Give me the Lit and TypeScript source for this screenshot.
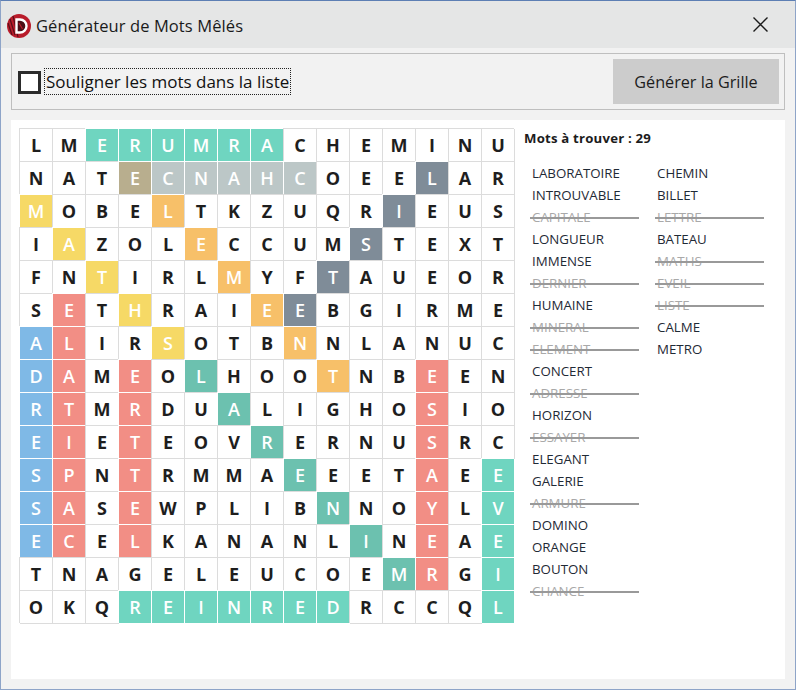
import { LitElement, html, css } from "lit";
import { customElement } from "lit/decorators.js";

const ROWS = [
  "LMERUMRACHEMINU",
  "NATECNAHCOEELAR",
  "MOBELTKZUQRIEUS",
  "IAZOLECCUMSTEXT",
  "FNTIRLMYFTAUEOR",
  "SETHRAIEEBGIRME",
  "ALIRSOTBNNLANUC",
  "DAMEOLHOOTNBEEN",
  "RTMRDUALIGHOSIO",
  "EIETEOVRERNUSRC",
  "SPNTRMMAEEETAEE",
  "SASEWPLIBNNOYLV",
  "ECELKANANLINEAE",
  "TNAGELEUCOEMRGI",
  "OKQREINREDRCCQL",
];

type Cell = [number, number];
const line = (r: number, c: number, dr: number, dc: number, n: number): Cell[] =>
  Array.from({ length: n }, (_, i) => [r + dr * i, c + dc * i] as Cell);

const FILLS: Record<string, Cell[]> = {
  teal: [...line(0, 2, 0, 1, 6), ...line(10, 14, 1, 0, 5), ...line(14, 3, 0, 1, 7)],
  mist: line(1, 4, 0, 1, 5),
  tan: [[1, 3]],
  yellow: line(2, 0, 1, 1, 5),
  orange: line(2, 4, 1, 1, 6),
  slate: line(1, 12, 1, -1, 5),
  red: [...line(5, 1, 1, 0, 8), ...line(7, 3, 1, 0, 6), ...line(7, 12, 1, 0, 7)],
  blue: line(6, 0, 1, 0, 7),
  deep: line(7, 5, 1, 1, 7),
};

const fillAt = (r: number, c: number): string => {
  for (const name of Object.keys(FILLS)) {
    if (FILLS[name].some(([a, b]) => a === r && b === c)) return name;
  }
  return "";
};

const COL_A = [
  ["LABORATOIRE", 0], ["INTROUVABLE", 0], ["CAPITALE", 1], ["LONGUEUR", 0], ["IMMENSE", 0],
  ["DERNIER", 1], ["HUMAINE", 0], ["MINERAL", 1], ["ELEMENT", 1], ["CONCERT", 0],
  ["ADRESSE", 1], ["HORIZON", 0], ["ESSAYER", 1], ["ELEGANT", 0], ["GALERIE", 0],
  ["ARMURE", 1], ["DOMINO", 0], ["ORANGE", 0], ["BOUTON", 0], ["CHANCE", 1],
] as [string, number][];
const COL_B = [
  ["CHEMIN", 0], ["BILLET", 0], ["LETTRE", 1], ["BATEAU", 0], ["MATHS", 1],
  ["EVEIL", 1], ["LISTE", 1], ["CALME", 0], ["METRO", 0],
] as [string, number][];

@customElement("app-root")
export class AppRoot extends LitElement {
  static styles = css`
    :host {
      display: block;
      width: 796px;
      height: 690px;
      font-family: "Open Sans", "Noto Sans", sans-serif;
      color: #1c1c1c;
    }
    * { box-sizing: border-box; }
    .window {
      width: 796px;
      height: 690px;
      display: flex;
      flex-direction: column;
      background: #f2f2f2;
      border: 1px solid #8ea4c8;
      border-top-color: #5d7fb4;
    }
    .titlebar {
      height: 47px;
      flex: none;
      display: flex;
      align-items: center;
      background: #e5e6e6;
      padding: 3px 0 0 6px;
    }
    .logo { width: 24px; height: 24px; flex: none; margin-right: 5px; }
    .title { font-size: 16.5px; white-space: nowrap; letter-spacing: 0.1px; color: #1a1a1a; margin-top: -2px; }
    .close { width: 15px; height: 15px; margin-left: auto; margin-right: 27px; margin-top: -3px; display: block; }
    .toolbar {
      flex: none;
      height: 57px;
      margin: 5px 10px 0 10px;
      border: 1px solid #bfbfbf;
      display: flex;
      align-items: center;
      padding: 0 5px 0 6px;
    }
    .check {
      width: 23px;
      height: 23px;
      border: 3px solid #2b2b2b;
      background: #fff;
      flex: none;
      margin-top: 1px;
    }
    .label {
      margin-left: 3px;
      height: 27px;
      display: flex;
      align-items: center;
      padding: 0 1px 0 1px;
      border: 1px dotted #222;
      font-size: 17px;
      white-space: nowrap;
      color: #111;
    }
    .generate {
      margin-left: auto;
      width: 166px;
      height: 45px;
      background: #cccccc;
      border: none;
      padding: 0;
      font-family: inherit;
      font-size: 16.2px;
      color: #1c1c1c;
    }
    .panel {
      flex: none;
      height: 559px;
      margin: 10px 10px 0 10px;
      background: #fff;
      display: flex;
      align-items: flex-start;
      padding: 8px 0 0 8px;
    }
    .grid {
      display: grid;
      grid-template-columns: repeat(15, 33px);
      grid-auto-rows: 33px;
      flex: none;
    }
    .cell {
      display: flex;
      align-items: center;
      justify-content: center;
      border-left: 1px solid #dcdcdc;
      border-top: 1px solid #dcdcdc;
      box-shadow: 1px 1px 0 #dcdcdc;
      background: #fff;
      font-weight: 700;
      font-size: 18px;
      color: #1e1e1e;
    }
    .cell.on {
      border-color: #fff;
      box-shadow: 1px 1px 0 #fff;
      color: #fff;
      font-weight: 600;
    }
    .teal { background: #6fd5c0; }
    .mist { background: #bcc7c7; }
    .tan { background: #b8ae8e; }
    .yellow { background: #f6d966; }
    .orange { background: #f7c069; }
    .slate { background: #7f8c98; }
    .red { background: #f28e85; }
    .blue { background: #7fb9e6; }
    .deep { background: #6cc1af; }
    .side { margin-left: 10px; padding-top: 1px; }
    .count {
      font-size: 13.2px;
      font-weight: 700;
      line-height: 18px;
      white-space: nowrap;
      color: #1c1c1c;
      letter-spacing: 0.2px;
    }
    .lists { display: flex; margin-top: 15px; padding-left: 6px; }
    .col { width: 125px; }
    .word {
      position: relative;
      height: 22px;
      line-height: 22px;
      padding-left: 2px;
      font-size: 13.3px;
      color: #1f2a36;
      white-space: nowrap;
    }
    .word.done { color: #a9a9a9; }
    .word.done::after {
      content: "";
      position: absolute;
      left: 0;
      top: 11px;
      width: 109px;
      height: 2px;
      background: #999;
    }
  `;

  private renderCol(words: [string, number][]) {
    return html`<div class="col">
      ${words.map(([w, d]) => html`<div class="word ${d ? "done" : ""}">${w}</div>`)}
    </div>`;
  }

  render() {
    return html`
      <div class="window">
        <div class="titlebar">
          <svg class="logo" viewBox="0 0 24 24">
            <circle cx="12" cy="12" r="12" fill="#b91c2b" />
            <path d="M3 5 L8 21 M1 9 L5 21 M6 2 L11 23" stroke="#5a0f18" stroke-width="1.2" fill="none" />
            <path d="M9.5 5.5 H13 A6.5 6.5 0 0 1 13 18.5 H9.5 Z" fill="#4c0e16" stroke="#fff" stroke-width="2.4" />
            <path d="M12 9 L15.5 15" stroke="#b91c2b" stroke-width="1.2" fill="none" />
          </svg>
          <span class="title">Générateur de Mots Mêlés</span>
          <svg class="close" viewBox="0 0 15 15">
            <path d="M0.5 0.5 L14.5 14.5 M14.5 0.5 L0.5 14.5" stroke="#1a1a1a" stroke-width="1.4" fill="none" />
          </svg>
        </div>
        <div class="toolbar">
          <span class="check"></span>
          <span class="label">Souligner les mots dans la liste</span>
          <button class="generate">Générer la Grille</button>
        </div>
        <div class="panel">
          <div class="grid">
            ${ROWS.map((row, r) =>
              [...row].map((ch, c) => {
                const f = fillAt(r, c);
                return html`<div class="cell ${f ? "on " + f : ""}">${ch}</div>`;
              })
            )}
          </div>
          <div class="side">
            <div class="count">Mots à trouver : 29</div>
            <div class="lists">${this.renderCol(COL_A)}${this.renderCol(COL_B)}</div>
          </div>
        </div>
      </div>
    `;
  }
}
